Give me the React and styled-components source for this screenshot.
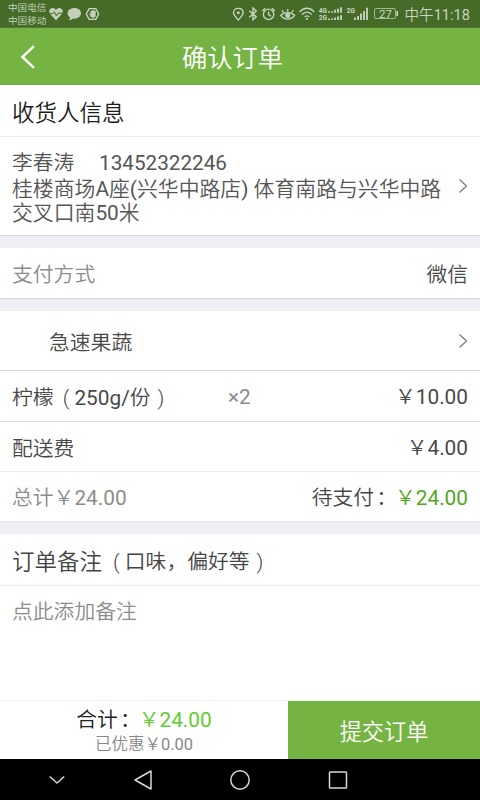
import styled, { createGlobalStyle } from "styled-components";

const items = [
  { name: "柠檬", unit: "250g/份", count: "×2", price: "￥10.00" },
];

export default function App() {
  return (
    <Screen>
      <GlobalStyle />
      <StatusBar />
      <Header>
        <BackIcon width="16" height="24" viewBox="0 0 16 24">
          <path d="M14 1.2 L2.4 12 L14 22.8" />
        </BackIcon>
        <h1>确认订单</h1>
      </Header>
      <Content>
        <Title $height={52}>收货人信息</Title>
        <Address>
          <div>
            <p className="person">
              <span>李春涛</span>
              <span>13452322246</span>
            </p>
            <p className="street">
              桂楼商场A座(兴华中路店) 体育南路与兴华中路
              <br />
              交叉口南50米
            </p>
          </div>
          <Arrow />
        </Address>
        <Divider $height={12} />
        <Row $height={51} $line="#d6d6da">
          <Label $muted>支付方式</Label>
          <Label>微信</Label>
        </Row>
        <Divider $height={12} />
        <Row $height={60} $line="#d2d2d2">
          <Shop>急速果蔬</Shop>
          <Arrow />
        </Row>
        {items.map((item) => (
          <Row key={item.name} $height={51} $line="#dcdcdc">
            <ItemName>
              {item.name}
              <Paren $open>(</Paren>
              {item.unit}
              <Paren>)</Paren>
            </ItemName>
            <Count>{item.count}</Count>
            <Label $amount>{item.price}</Label>
          </Row>
        ))}
        <Row $height={50} $line="#ededed">
          <Label>配送费</Label>
          <Label $amount>￥4.00</Label>
        </Row>
        <Row $height={50} $line="#e4e4e8">
          <Label $muted $amount>
            总计￥24.00
          </Label>
          <Label $amount>
            待支付<Colon>：</Colon>
            <Price>￥24.00</Price>
          </Label>
        </Row>
        <Divider $height={12} />
        <Title $height={52} $soft>
          订单备注
          <small>
            <Paren $open>(</Paren>口味，偏好等<Paren>)</Paren>
          </small>
        </Title>
        <Note>点此添加备注</Note>
      </Content>
      <Footer>
        <Total>
          <p className="sum">
            合计<Colon>：</Colon>
            <span className="amount">￥24.00</span>
          </p>
          <p className="discount">已优惠￥0.00</p>
        </Total>
        <Submit>提交订单</Submit>
      </Footer>
      <NavBar />
    </Screen>
  );
}

function Arrow() {
  return (
    <ArrowIcon width="10" height="16" viewBox="0 0 10 16">
      <path d="M1.5 1.5 L8.5 8 L1.5 14.5" />
    </ArrowIcon>
  );
}

function StatusBar() {
  return (
    <Status>
      <Carriers>
        <span>中国电信</span>
        <span>中国移动</span>
      </Carriers>
      <StatusIcons width="53" height="28" viewBox="48 0 53 28">
        <path
          className="solid"
          d="M56 20.2 L50.3 14.3 C47.8 11 50 8 52.6 8 C54.3 8 55.4 9 56 10 C56.6 9 57.7 8 59.4 8 C62 8 64.2 11 61.7 14.3 Z"
        />
        <path className="cut" d="M49 13.6 H53 L54.4 11.8 L56.4 16 L58 13.2 H63" />
        <path
          className="solid"
          d="M74.5 8 C70.4 8 67.5 10.4 67.5 13.3 C67.5 15 68.4 16.5 70 17.5 C70 18.8 69.4 19.6 68.5 20.2 C70.6 20.2 72 19.5 73 18.6 C78 19 81 16.4 81 13.3 C81 10.4 78.4 8 74.5 8 Z"
        />
        <path d="M89.2 8.6 H95.8 L98.7 14 L95.8 19.4 H89.2 L86.3 14 Z" />
        <path
          className="solid"
          d="M88.8 13.2 L90.4 14.2 V11.2 H91.6 V10.4 H92.9 V10 H94.1 V10.8 H95.7 V15.5 C95.7 17.2 94.3 17.8 93 17.8 C91 17.8 90.5 16.3 88.8 13.2 Z"
        />
      </StatusIcons>
      <Spacer />
      <StatusIcons width="167" height="28" viewBox="231 0 167 28">
        <path d="M238.3 20 C236 17.2 233.5 15.3 233.5 12.7 C233.5 10 235.6 8.3 238.3 8.3 C241 8.3 243.1 10 243.1 12.7 C243.1 15.3 240.6 17.2 238.3 20 Z" />
        <circle className="solid" cx="238.3" cy="12.8" r="1.5" />
        <path d="M249.3 10.7 L256.3 16.7 L253 19.8 V8 L256.3 11 L249.3 17.2" />
        <circle cx="268.6" cy="14.4" r="5.2" />
        <path d="M268.6 11.5 V14.6 L271 16.3 M262.3 11 L265.2 8.3 M274.9 11 L272 8.3" />
        <path d="M280.7 15.4 C284 11.7 291 11.7 294.7 15.4 C291 20.3 284 20.3 280.7 15.4 Z M287.7 9 V11.5 M282 10.2 L283.5 12.3 M293.4 10.2 L291.8 12.3" />
        <circle className="solid" cx="287.7" cy="15.4" r="2.5" />
        <path d="M299.6 12 C304 7 310 7 314.2 12 M302 14.7 C305 11.4 309 11.4 311.8 14.7 M304.6 17.2 C306 15.4 307.8 15.4 309.2 17.2" />
        <circle className="solid" cx="306.9" cy="19" r="1.1" />
        <text x="318.7" y="12.6">4G</text>
        <text x="318.7" y="20">2G</text>
        <path
          className="bars"
          d="M329 12.7 v-1.5 M332 12.7 v-1.5 M335 12.7 v-3 M338 12.7 v-4 M341 12.7 v-5.4 M329 20 v-1.5 M332 20 v-1.5 M335 20 v-2.5 M338 20 v-3.5 M341 20 v-4.8"
        />
        <text x="346.7" y="12.6">2G</text>
        <path
          className="bars"
          d="M355 20 v-2.5 M358 20 v-4 M361 20 v-6.5 M364 20 v-9 M367 20 v-12.3"
        />
        <rect className="battery" x="374.5" y="8.5" width="21" height="10" rx="1.5" />
        <path className="bars" d="M397.3 11 v5" />
        <text className="level" x="385.5" y="17.5">27</text>
      </StatusIcons>
      <Clock>中午11:18</Clock>
    </Status>
  );
}

function NavBar() {
  return (
    <Nav>
      <svg width="20" height="20" viewBox="0 0 20 20">
        <path d="M2.8 6.5 L10 13 L17.2 6.5" />
      </svg>
      <svg width="20" height="20" viewBox="0 0 20 20">
        <path d="M18 1 V19 L2 10 Z" />
      </svg>
      <svg width="20" height="20" viewBox="0 0 20 20">
        <circle cx="10" cy="10" r="9.2" />
      </svg>
      <svg width="20" height="20" viewBox="0 0 20 20">
        <rect x="1.5" y="2" width="17" height="16" rx="0.8" />
      </svg>
    </Nav>
  );
}

const GlobalStyle = createGlobalStyle`
  * {
    box-sizing: border-box;
    margin: 0;
    padding: 0;
  }
  body {
    font-family: Roboto, "Noto Sans CJK SC DemiLight", "Noto Sans CJK SC Light",
      "Noto Sans CJK SC", sans-serif;
    font-weight: 400;
    background-color: #fff;
  }
`;

const Screen = styled.div`
  display: flex;
  flex-direction: column;
  width: 480px;
  height: 800px;
  overflow: hidden;
  background-color: #fff;
`;

const Status = styled.div`
  display: flex;
  flex: none;
  height: 28px;
  padding: 0 10px 0 8px;
  background-color: #466b28;
  border-bottom: 1px solid #4f7b2d;
  color: #c8d5be;
`;

const Carriers = styled.div`
  display: flex;
  flex-direction: column;
  width: 40px;
  padding-top: 2px;
  font-size: 9.6px;
  line-height: 12.5px;
  white-space: nowrap;
`;

const StatusIcons = styled.svg`
  flex: none;
  fill: none;
  stroke: #cbd7c2;
  stroke-width: 1.3;
  .solid {
    fill: #c3d0b9;
    stroke: none;
  }
  .cut {
    stroke: #466b28;
    stroke-width: 1;
  }
  .bars {
    stroke-width: 1.8;
  }
  .battery {
    stroke: #a3b594;
    stroke-width: 1;
  }
  text {
    fill: #cbd7c2;
    stroke: none;
    font-size: 6.6px;
    font-weight: 700;
  }
  .level {
    font-size: 11.5px;
    font-weight: 400;
    text-anchor: middle;
  }
`;

const Spacer = styled.div`
  flex: 1;
`;

const Clock = styled.span`
  width: 72px;
  padding-top: 1px;
  font-size: 14.6px;
  line-height: 28px;
  text-align: right;
  white-space: nowrap;
`;

const Header = styled.header`
  display: grid;
  grid-template-columns: 60px 1fr 75px;
  align-items: center;
  flex: none;
  height: 57px;
  background-color: #75b442;
  border-bottom: 1px solid #6ba63b;
  color: #fff;
  h1 {
    padding-top: 5px;
    font-size: 25.3px;
    font-weight: 400;
    line-height: 51px;
    text-align: center;
  }
`;

const BackIcon = styled.svg`
  margin: 1px 0 0 20px;
  fill: none;
  stroke: #fff;
  stroke-width: 2.4;
`;

const Content = styled.main`
  flex: 1;
  min-height: 0;
`;

const Title = styled.h2`
  display: flex;
  align-items: center;
  height: ${(props) => props.$height}px;
  padding: 0 12px;
  border-bottom: 1px solid #eee;
  color: ${(props) => (props.$soft ? "#444" : "#1c1c1c")};
  font-size: 22.5px;
  font-weight: 400;
  small {
    padding-left: 2px;
    font-size: 20.8px;
  }
`;

const Address = styled.section`
  display: flex;
  justify-content: space-between;
  height: 99px;
  padding: 14px 12px 0;
  border-bottom: 1px solid #d8d8d8;
  color: #555;
  font-size: 20.85px;
  white-space: nowrap;
  .person {
    display: flex;
    gap: 25px;
    font-size: 20.7px;
    line-height: 25px;
  }
  .street {
    line-height: 23.5px;
    padding-top: 2px;
  }
  svg {
    margin-top: 27px;
  }
`;

const ArrowIcon = styled.svg`
  flex: none;
  fill: none;
  stroke: #777;
  stroke-width: 1.2;
`;

const Divider = styled.div`
  height: ${(props) => props.$height}px;
  background-color: #efeef4;
`;

const Row = styled.div`
  display: flex;
  align-items: center;
  justify-content: space-between;
  height: ${(props) => props.$height}px;
  padding: 0 12px;
  border-bottom: 1px solid ${(props) => props.$line};
  font-size: 20.8px;
`;

const Label = styled.span`
  padding-bottom: ${(props) => (props.$amount ? 2 : 0)}px;
  color: ${(props) => (props.$muted ? "#8c8c8c" : "#484848")};
`;

const Price = styled.span`
  color: #53a71c;
`;

const Shop = styled.span`
  padding-left: 37px;
  color: #484848;
`;

const ItemName = styled.span`
  width: 216px;
  color: #484848;
`;

const Count = styled.span`
  flex: 1;
  padding-top: 2px;
  color: #8c8c8c;
`;

const Paren = styled.span`
  display: inline-block;
  width: 20.8px;
  padding-left: ${(props) => (props.$open ? 4 : 0)}px;
  font-weight: 300;
  text-align: center;
`;

// the full-width colon sits low and left in its cell, nudge it to the middle
const Colon = styled.span`
  display: inline-block;
  width: 20.8px;
  text-indent: 2px;
`;

const Note = styled.p`
  padding: 0 12px;
  color: #8c8c8c;
  font-size: 20.8px;
  line-height: 53px;
`;

const Footer = styled.footer`
  display: flex;
  flex: none;
  height: 59px;
  border-top: 1px solid #f2f2f2;
`;

const Total = styled.div`
  width: 288px;
  text-align: center;
  .sum {
    padding-top: 4px;
    color: #222;
    font-size: 20.8px;
    line-height: 30px;
  }
  .amount {
    color: #62cc30;
  }
  .discount {
    color: #888;
    font-size: 16.5px;
    line-height: 20px;
  }
`;

const Submit = styled.button`
  flex: 1;
  border: none;
  background-color: #75b442;
  color: #fff;
  font-family: inherit;
  font-size: 22.2px;
  font-weight: 400;
`;

const Nav = styled.nav`
  display: flex;
  align-items: center;
  gap: 77.5px;
  flex: none;
  height: 41px;
  padding-left: 46.5px;
  background-color: #000;
  svg {
    fill: none;
    stroke: #d8d8d8;
    stroke-width: 1.5;
    stroke-linejoin: round;
  }
  svg:nth-child(2) {
    margin-left: -11.5px;
  }
`;
